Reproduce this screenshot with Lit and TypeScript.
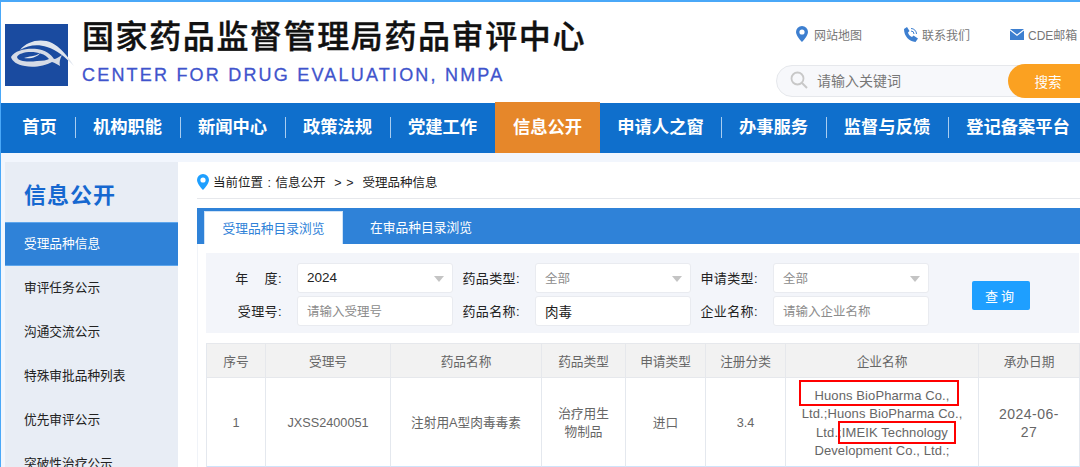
import { LitElement, html, css, svg } from "lit";
import { customElement } from "lit/decorators.js";

const NAV = ["首页", "机构职能", "新闻中心", "政策法规", "党建工作", "信息公开", "申请人之窗", "办事服务", "监督与反馈", "登记备案平台"];
const NAV_W = [74, 105, 105, 105, 105, 105, 121, 105, 122, 140];
const SIDE = ["审评任务公示", "沟通交流公示", "特殊审批品种列表", "优先审评公示", "突破性治疗公示"];
const HEAD = ["序号", "受理号", "药品名称", "药品类型", "申请类型", "注册分类", "企业名称", "承办日期"];

const pin = (c: string, w: number, h: number) => svg`<svg width=${w} height=${h} viewBox="0 0 12 16"><path fill=${c} fill-rule="evenodd" d="M6 0a6 6 0 0 0-6 6c0 4 6 10 6 10s6-6 6-10a6 6 0 0 0-6-6zm0 3.4a2.6 2.6 0 1 1 0 5.2 2.6 2.6 0 0 1 0-5.2z"/></svg>`;

@customElement("app-root")
export class AppRoot extends LitElement {
  static styles = css`
    :host { display: block; width: 1080px; height: 467px; overflow: hidden; position: relative; background: #fff;
      font-family: "Liberation Sans", "Noto Sans CJK SC", sans-serif; box-sizing: border-box; border-top: 2px solid #4aa8f8; border-left: 1px solid #4aa8f8; }
    * { box-sizing: border-box; }
    .header { height: 101px; display: flex; padding-left: 4px; }
    .logo { width: 63px; height: 62px; margin-top: 22px; background: #1a4ba0; flex: none; }
    .logo svg { display: block; overflow: visible; }
    .brand { margin-left: 14px; width: 690px; flex: none; }
    .cn { font-size: 32px; line-height: 36px; margin-top: 17px; letter-spacing: 1.6px; color: #111; font-weight: 500; -webkit-text-stroke: 0.4px #111; white-space: nowrap; }
    .en { font-size: 18px; line-height: 22px; margin-top: 9px; letter-spacing: 2.2px; color: #3f54cc; font-weight: 400; -webkit-text-stroke: 0.3px #3f54cc; white-space: nowrap; }
    .tools { flex: 1; min-width: 0; }
    .links { display: flex; height: 63px; padding: 23px 0 0 24px; font-size: 12px; color: #777; white-space: nowrap; }
    .link { display: flex; align-items: center; height: 18px; gap: 4px; }
    .link.a { width: 107px; gap: 6px; }
    .link.b { width: 107px; }
    .search { margin-left: 4px; width: 316px; height: 32px; border: 1px solid #e6e8ec; border-radius: 17px 0 0 17px; background: #f7f8fb; display: flex; align-items: center; position: relative; padding: 0 0 2px 13px; font-size: 14px; color: #777; gap: 9px; }
    .sbtn { position: absolute; left: 231px; top: -2px; width: 90px; height: 34px; background: #fba121; border-radius: 17px 0 0 17px; color: #fff; font-size: 13.5px; display: flex; align-items: center; justify-content: center; padding-right: 10px; }
    .nav { height: 50px; background: #0f6fcc; display: flex; color: #fff; font-size: 17.3px; font-weight: 700; }
    .nav-item { display: flex; align-items: center; justify-content: center; position: relative; white-space: nowrap; flex: none; padding-bottom: 5px; }
    .nav-item:first-child { padding-left: 3px; }
    .nav-item + .nav-item::before { content: ""; position: absolute; left: 0; top: 14px; height: 21px; width: 1px; background: #a9cdf0; }
    .nav-item.on { background: #e6872a; margin-top: -1px; }
    .nav-item.on::before, .nav-item.on + .nav-item::before { display: none; }
    .body { background: #f2f6fd; padding: 9px 0 0 4px; display: flex; height: 314px; }
    .side { width: 173px; background: #e8edf5; flex: none; }
    .side h2 { margin: 0; height: 60px; padding: 19px 0 0 19px; font-size: 22px; line-height: 30px; letter-spacing: 1px; font-weight: 700; color: #1668d0; }
    .side div { height: 44px; padding: 0 0 3px 19px; display: flex; align-items: center; font-size: 12.7px; color: #222; white-space: nowrap; }
    .side div.on { background: #2f82d8; color: #fff; border: 1px solid #5ea6ec; border-left: 0; border-right: 0; }
    .main { flex: 1; min-width: 0; background: #fff; padding-left: 19px; }
    .crumb { height: 37px; padding-top: 3px; border-bottom: 1px solid #e6e8ec; display: flex; align-items: center; gap: 4px; font-size: 12.5px; word-spacing: 1px; color: #222; white-space: nowrap; }
    .tabs { margin-top: 9px; height: 36px; background: #2f82d8; display: flex; padding: 3px 0 0 7px; color: #fff; font-size: 12.75px; }
    .tab { width: 156px; display: flex; align-items: center; justify-content: center; padding-bottom: 2px; }
    .tab.on { width: 139px; background: #fff; color: #2f82d8; border: 1px solid #cfe2f6; border-bottom: 0; }
    .panel { padding: 9px 0 0 8px; width: 890px; border-left: 1px solid #f0f3f8; }
    .filter { height: 80px; background: #f3f5fa; display: grid; grid-template-columns: 91px 156px 82px 156px 82px 156px auto; grid-auto-rows: 30px; row-gap: 3px; padding-top: 10px; font-size: 13px; color: #222; align-items: center; width: 873px; }
    .lab { text-align: right; padding: 0 15px 2px 0; white-space: nowrap; letter-spacing: 0.4px; }
    .box { height: 30px; background: #fff; border: 1px solid #e9ebf0; border-radius: 3px; padding: 0 0 1px 9px; display: flex; align-items: center; position: relative; color: #222; white-space: nowrap; font-size: 13.5px; }
    .box.ph { color: #8c8c8c; font-size: 12.5px; }
    .box.sel::after { content: ""; position: absolute; right: 8px; top: 12px; border: 5.5px solid transparent; border-top: 6px solid #c4c4c4; border-bottom: 0; }
    .query { grid-column: 7; grid-row: 1 / span 2; width: 58px; height: 29px; margin: 1px 0 0 43px; background: #1e9fff; color: #fff; border-radius: 2px; display: flex; align-items: center; justify-content: center; letter-spacing: 3px; font-size: 13px; }
    .table { margin-top: 10px; width: 874px; display: grid; grid-template-columns: 59px 125px 151px 84px 80px 80px 193px 101px; font-size: 12.7px; color: #666; border-left: 1px solid #e4e8ee; }
    .th { height: 35px; padding-bottom: 1px; background: #f2f2f2; border: 1px solid #e6e8ec; border-left: 0; display: flex; align-items: center; justify-content: center; }
    .td { height: 89px; padding: 2px 12px 0; border-right: 1px solid #e4e8ee; border-bottom: 1px solid #cfe3fa; display: flex; align-items: center; justify-content: center; text-align: center; line-height: 18px; }
    .td.narrow { padding: 2px 16px 0; }
    .td.co { font-size: 13px; letter-spacing: 0.1px; line-height: 18.3px; padding: 9px 8px 0; position: relative; align-items: flex-start; }
    .td.dt { font-size: 14px; letter-spacing: 0.5px; padding: 2px 18px 0; }
    .mark { position: absolute; border: 2px solid #f00; }
    .m1 { left: 13px; top: 2px; width: 160px; height: 26px; }
    .m2 { left: 52px; top: 43px; width: 118px; height: 23px; }
  `;

  render() {
    return html`
      <div class="header">
        <div class="logo">
          <svg width="63" height="62" viewBox="0 0 63 62">
            <path d="M15 26C22 17 36 14 47 19c8 4 15 12 22 23-9-9-17-16-27-19-9-3-19-2-27 3z" fill="#dfe5ee"/>
            <path fill-rule="evenodd" d="M6 33c4-7 16-9 26-8 8 1 14 5 17 10 2 0 5-2 8-4-2 4-3 7-2 11-3-2-5-3-8-4-7 4-19 6-27 4C12 41 7 37 6 33zm6 0c1 5 12 5 20 4 6 0 10-1 12-2-4-5-11-7-18-7-7 0-13 2-14 5z" fill="#d5dbe6"/>
            <path d="M19 34c5-2 11-1 16-5-2 4-9 6-16 5z" fill="#e6eaf0"/>
          </svg>
        </div>
        <div class="brand">
          <div class="cn">国家药品监督管理局药品审评中心</div>
          <div class="en">CENTER FOR DRUG EVALUATION, NMPA</div>
        </div>
        <div class="tools">
          <div class="links">
            <span class="link a">${pin("#3d7fd0", 12, 16)}网站地图</span>
            <span class="link b"><svg width="15" height="15" viewBox="0 0 15 15"><path fill="#3d7fd0" d="M1 2l3-2 2.500 4-1.500 1.500c.5 2 2 3.500 4 4.500L10.500 8.500 15 11.500 12.500 15C6 14.500 1 9 1 2z"/><path fill="none" stroke="#3d7fd0" d="M8 1.500a5.500 5.500 0 0 1 5.500 5.500M8 4a3 3 0 0 1 3 3"/></svg>联系我们</span>
            <span class="link"><svg width="14" height="11" viewBox="0 0 14 11"><path fill="#3d7fd0" d="M0 0h14L7 5.500zM0 1.500l7 5.500 7-5.500V11H0z"/></svg>CDE邮箱</span>
          </div>
          <div class="search">
            <svg width="18" height="18" viewBox="0 0 18 18"><circle cx="7.500" cy="7.500" r="6" fill="none" stroke="#c8c8c8" stroke-width="1.800"/><path d="M12 12l5 5" stroke="#c8c8c8" stroke-width="2"/></svg>
            请输入关键词
            <div class="sbtn">搜索</div>
          </div>
        </div>
      </div>
      <div class="nav">
        ${NAV.map((n, i) => html`<div class="nav-item ${i === 5 ? "on" : ""}" style="width:${NAV_W[i]}px">${n}</div>`)}
      </div>
      <div class="body">
        <div class="side">
          <h2>信息公开</h2>
          <div class="on">受理品种信息</div>
          ${SIDE.map((s) => html`<div>${s}</div>`)}
        </div>
        <div class="main">
          <div class="crumb">${pin("#1e9fff", 12, 16)}当前位置 : 信息公开 &nbsp;&gt;&nbsp;&gt;&nbsp;&nbsp;受理品种信息</div>
          <div class="tabs">
            <div class="tab on">受理品种目录浏览</div>
            <div class="tab">在审品种目录浏览</div>
          </div>
          <div class="panel">
            <div class="filter">
              <div class="lab">年&nbsp;&nbsp;&nbsp;&nbsp;度:</div><div class="box sel">2024</div>
              <div class="lab">药品类型:</div><div class="box sel ph">全部</div>
              <div class="lab">申请类型:</div><div class="box sel ph">全部</div>
              <div class="query">查询</div>
              <div class="lab">受理号:</div><div class="box ph">请输入受理号</div>
              <div class="lab">药品名称:</div><div class="box">肉毒</div>
              <div class="lab">企业名称:</div><div class="box ph">请输入企业名称</div>
            </div>
            <div class="table">
              ${HEAD.map((h) => html`<div class="th">${h}</div>`)}
              <div class="td">1</div>
              <div class="td">JXSS2400051</div>
              <div class="td">注射用A型肉毒毒素</div>
              <div class="td narrow">治疗用生物制品</div>
              <div class="td">进口</div>
              <div class="td">3.4</div>
              <div class="td co"><span>Huons BioPharma Co., Ltd.;Huons BioPharma Co., Ltd.;IMEIK Technology Development Co., Ltd.;</span><i class="mark m1"></i><i class="mark m2"></i></div>
              <div class="td dt">2024-06-27</div>
            </div>
          </div>
        </div>
      </div>
    `;
  }
}
